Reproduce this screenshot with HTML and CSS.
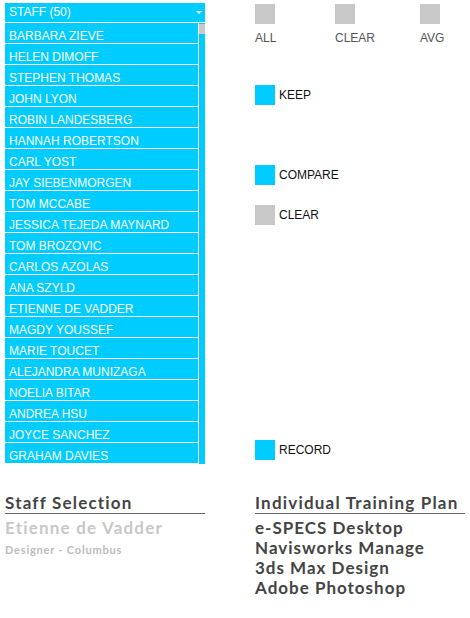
FILE: index.html
```html
<!DOCTYPE html>
<html>
<head>
<meta charset="utf-8">
<link rel="stylesheet" href="styles.css">
</head>
<body>
<div class="page">
  <div class="top">
    <div class="staff">
      <div class="staff-head"><span>STAFF (50)</span><span class="caret"></span></div>
      <div class="staff-list">
        <ul class="names">
          <li>BARBARA ZIEVE</li>
          <li>HELEN DIMOFF</li>
          <li>STEPHEN THOMAS</li>
          <li>JOHN LYON</li>
          <li>ROBIN LANDESBERG</li>
          <li>HANNAH ROBERTSON</li>
          <li>CARL YOST</li>
          <li>JAY SIEBENMORGEN</li>
          <li>TOM MCCABE</li>
          <li>JESSICA TEJEDA MAYNARD</li>
          <li>TOM BROZOVIC</li>
          <li>CARLOS AZOLAS</li>
          <li>ANA SZYLD</li>
          <li>ETIENNE DE VADDER</li>
          <li>MAGDY YOUSSEF</li>
          <li>MARIE TOUCET</li>
          <li>ALEJANDRA MUNIZAGA</li>
          <li>NOELIA BITAR</li>
          <li>ANDREA HSU</li>
          <li>JOYCE SANCHEZ</li>
          <li>GRAHAM DAVIES</li>
        </ul>
        <div class="scroll"><div class="thumb"></div></div>
      </div>
    </div>
    <div class="controls">
      <div class="toolbar">
        <div class="tool tool-all"><span class="sq grey"></span><span class="tool-label">ALL</span></div>
        <div class="tool tool-clear"><span class="sq grey"></span><span class="tool-label">CLEAR</span></div>
        <div class="tool tool-avg"><span class="sq grey"></span><span class="tool-label">AVG</span></div>
      </div>
      <div class="opt opt-keep"><span class="sq blue"></span><span class="opt-label">KEEP</span></div>
      <div class="opt opt-compare"><span class="sq blue"></span><span class="opt-label">COMPARE</span></div>
      <div class="opt opt-clear"><span class="sq grey"></span><span class="opt-label">CLEAR</span></div>
      <div class="opt opt-record"><span class="sq blue"></span><span class="opt-label">RECORD</span></div>
    </div>
  </div>
  <div class="bottom">
    <div class="info">
      <h2 class="heading">Staff Selection</h2>
      <div class="person">Etienne de Vadder</div>
      <div class="role">Designer - Columbus</div>
    </div>
    <div class="plan">
      <h2 class="heading">Individual Training Plan</h2>
      <ul class="courses">
        <li>e-SPECS Desktop</li>
        <li>Navisworks Manage</li>
        <li>3ds Max Design</li>
        <li>Adobe Photoshop</li>
      </ul>
    </div>
  </div>
</div>
</body>
</html>
```

FILE: styles.css
```css
html, body {
  margin: 0;
  padding: 0;
  background: #ffffff;
}
.page {
  padding: 3px 0 0 5px;
  font-family: "Liberation Sans", Arial, sans-serif;
}
.top {
  display: flex;
}
.staff {
  width: 200px;
}
.staff-head {
  height: 19px;
  background: #00ccff;
  color: #ffffff;
  font-size: 12px;
  line-height: 19px;
  padding-left: 4px;
  display: flex;
  justify-content: space-between;
  align-items: center;
}
.caret {
  width: 0;
  height: 0;
  border-left: 3px solid transparent;
  border-right: 3px solid transparent;
  border-top: 3px solid #ffffff;
  margin-right: 3px;
}
.staff-list {
  margin-top: 1px;
  display: flex;
}
.names {
  list-style: none;
  margin: 0;
  padding: 0;
  width: 193px;
}
.names li {
  height: 16px;
  padding-top: 4px;
  line-height: 18px;
  border-bottom: 1px solid #ffffff;
  background: #00ccff;
  color: #ffffff;
  font-size: 12px;
  padding-left: 4px;
  white-space: nowrap;
  overflow: hidden;
}
.scroll {
  margin-left: 1px;
  width: 6px;
  background: #00ccff;
}
.thumb {
  margin-top: 1px;
  height: 10px;
  background: #c8c8c8;
}
.controls {
  margin-left: 50px;
  padding-top: 1px;
  flex: 1;
  min-width: 0;
}
.toolbar {
  display: flex;
}
.tool {
  display: flex;
  flex-direction: column;
}
.tool-all {
  width: 80px;
}
.tool-clear {
  width: 85px;
}
.tool-label {
  margin-top: 7px;
  font-size: 12px;
  line-height: 14px;
  color: #555555;
}
.sq {
  display: block;
  width: 20px;
  height: 20px;
  flex: none;
}
.sq.grey { background: #c8c8c8; }
.sq.blue { background: #00ccff; }
.opt {
  display: flex;
  align-items: center;
}
.opt-label {
  margin-left: 4px;
  font-size: 12px;
  line-height: 14px;
  color: #111111;
}
.opt-keep { margin-top: 40px; }
.opt-compare { margin-top: 60px; }
.opt-clear { margin-top: 20px; }
.opt-record { margin-top: 215px; }
.bottom {
  display: flex;
  margin-top: 29px;
  font-family: Lato, "Open Sans", sans-serif;
  font-weight: bold;
}
.info {
  width: 200px;
}
.plan {
  margin-left: 50px;
  width: 210px;
}
.heading {
  margin: 0;
  font-size: 17px;
  line-height: 20px;
  letter-spacing: 1.2px;
  color: #444444;
  border-bottom: 1px solid #666666;
  padding-bottom: 0;
}
.person {
  margin-top: 3px;
  font-size: 17px;
  line-height: 22px;
  letter-spacing: 1.2px;
  color: #c8c8c8;
}
.role {
  margin-top: 2px;
  font-size: 11px;
  line-height: 18px;
  letter-spacing: 0.8px;
  color: #bbbbbb;
}
.courses {
  list-style: none;
  margin: 4px 0 0 0;
  padding: 0;
}
.courses li {
  font-size: 17px;
  line-height: 20px;
  letter-spacing: 1px;
  color: #444444;
}
```
